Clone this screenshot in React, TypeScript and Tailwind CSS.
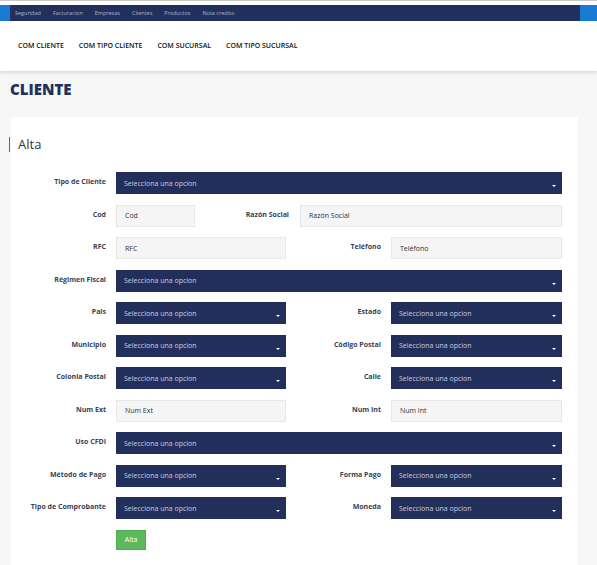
import React from "react";

const navItems = ["Seguridad", "Facturacion", "Empresas", "Clientes", "Productos", "Nota credito"];
const tabs = ["COM CLIENTE", "COM TIPO CLIENTE", "COM SUCURSAL", "COM TIPO SUCURSAL"];

function Label({ text, w = "w-[95px]" }: { text: string; w?: string }) {
  return (
    <div className={`${w} shrink-0 pt-[5px] text-right text-[7px] font-bold leading-[10px] text-[#3a3f57]`}>
      {text}
    </div>
  );
}

function Select({ w }: { w: string }) {
  return (
    <div className={`${w} relative flex h-[22px] shrink-0 items-center bg-[#232f5b] pl-[8px] pt-[2px] text-[7px] text-[#c9cde0]`}>
      Selecciona una opcion
      <span className="absolute bottom-[7px] right-[6px] h-0 w-0 border-x-[2px] border-t-[2px] border-x-transparent border-t-white" />
    </div>
  );
}

function Input({ w, placeholder }: { w: string; placeholder: string }) {
  return (
    <div className={`${w} flex h-[22px] shrink-0 items-center border border-[#e8e8e8] bg-[#f5f5f5] pl-[8px] pt-[2px] text-[7px] text-[#333]`}>
      {placeholder}
    </div>
  );
}

function Row({ children }: { children: React.ReactNode }) {
  return <div className="flex h-[22px] items-start">{children}</div>;
}

export default function App() {
  return (
    <div className="min-h-screen bg-[#f7f7f7] font-['Open_Sans',sans-serif]">
      <div className="h-px bg-[#c9c9c9]" />
      <div className="h-[4px] bg-white" />
      <div className="flex h-[16px] bg-[#22305c]">
        <div className="w-[10px] bg-[#1a7bd4]" />
        <nav className="flex flex-1 items-center gap-[12px] pl-[5px] text-[5.5px] text-[#aab3cf]">
          {navItems.map((n) => (
            <span key={n}>{n}</span>
          ))}
        </nav>
        <div className="w-[17px] bg-[#1a7bd4]" />
      </div>
      <div className="flex h-[50px] items-center gap-[15px] bg-white pl-[18px] shadow-[0_2px_3px_rgba(0,0,0,0.12)]">
        {tabs.map((t) => (
          <span key={t} className="text-[7px] font-semibold text-[#111]">
            {t}
          </span>
        ))}
      </div>
      <main className="pl-[11px]">
        <h1 className="ml-[-1px] pt-[7px] text-[15px] font-extrabold leading-[22px] text-[#22305c]">CLIENTE</h1>
        <section className="mt-[17px] w-[567px] bg-white pb-[20px] pt-[20px]">
          <div className="ml-[-2px] flex h-[15px] items-center border-l border-[#1a7bd4] pl-[8px] text-[13px] leading-none text-[#333]">
            Alta
          </div>
          <div className="mt-[20px] flex flex-col gap-[10.5px]">
            <Row>
              <Label text="Tipo de Cliente" />
              <div className="w-[10px]" />
              <Select w="w-[446px]" />
            </Row>
            <Row>
              <Label text="Cod" />
              <div className="w-[10px]" />
              <Input w="w-[79px]" placeholder="Cod" />
              <Label text="Razón Social" w="w-[94px]" />
              <div className="w-[11px]" />
              <Input w="w-[262px]" placeholder="Razón Social" />
            </Row>
            <Row>
              <Label text="RFC" />
              <div className="w-[10px]" />
              <Input w="w-[170px]" placeholder="RFC" />
              <Label text="Teléfono" />
              <div className="w-[10px]" />
              <Input w="w-[171px]" placeholder="Teléfono" />
            </Row>
            <Row>
              <Label text="Régimen Fiscal" />
              <div className="w-[10px]" />
              <Select w="w-[446px]" />
            </Row>
            <Row>
              <Label text="Pais" />
              <div className="w-[10px]" />
              <Select w="w-[170px]" />
              <Label text="Estado" />
              <div className="w-[10px]" />
              <Select w="w-[171px]" />
            </Row>
            <Row>
              <Label text="Municipio" />
              <div className="w-[10px]" />
              <Select w="w-[170px]" />
              <Label text="Código Postal" />
              <div className="w-[10px]" />
              <Select w="w-[171px]" />
            </Row>
            <Row>
              <Label text="Colonia Postal" />
              <div className="w-[10px]" />
              <Select w="w-[170px]" />
              <Label text="Calle" />
              <div className="w-[10px]" />
              <Select w="w-[171px]" />
            </Row>
            <Row>
              <Label text="Num Ext" />
              <div className="w-[10px]" />
              <Input w="w-[170px]" placeholder="Num Ext" />
              <Label text="Num Int" />
              <div className="w-[10px]" />
              <Input w="w-[171px]" placeholder="Num Int" />
            </Row>
            <Row>
              <Label text="Uso CFDI" />
              <div className="w-[10px]" />
              <Select w="w-[446px]" />
            </Row>
            <Row>
              <Label text="Método de Pago" />
              <div className="w-[10px]" />
              <Select w="w-[170px]" />
              <Label text="Forma Pago" />
              <div className="w-[10px]" />
              <Select w="w-[171px]" />
            </Row>
            <Row>
              <Label text="Tipo de Comprobante" />
              <div className="w-[10px]" />
              <Select w="w-[170px]" />
              <Label text="Moneda" />
              <div className="w-[10px]" />
              <Select w="w-[171px]" />
            </Row>
            <div className="flex">
              <div className="w-[105px] shrink-0" />
              <button className="flex h-[20px] w-[30px] items-center justify-center border border-[#4cae4c] bg-[#5cb85c] pt-[1px] text-[7px] text-white">
                Alta
              </button>
            </div>
          </div>
        </section>
      </main>
    </div>
  );
}
